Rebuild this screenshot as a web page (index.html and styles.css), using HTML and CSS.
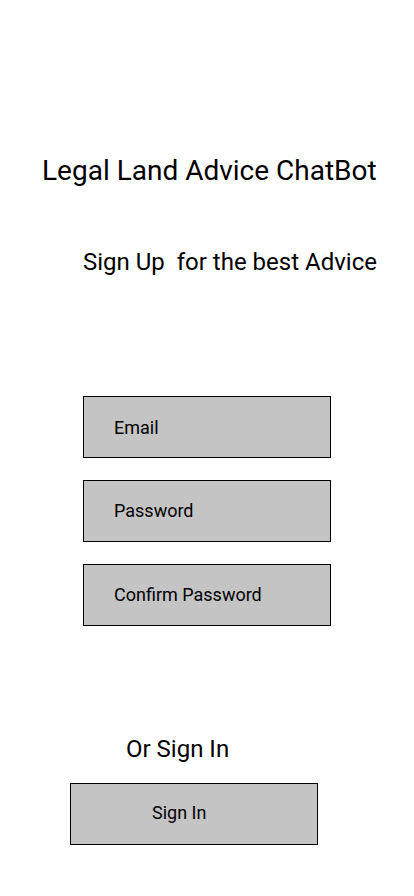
FILE: index.html
```html
<!DOCTYPE html>
<html>
<head>
<meta charset="utf-8">
<link rel="stylesheet" href="styles.css">
</head>
<body>
<main class="screen">
  <h1 class="title">Legal Land Advice ChatBot</h1>
  <p class="subtitle">Sign Up&nbsp; for the best Advice</p>
  <form class="fields">
    <div class="field field-email">Email</div>
    <div class="field">Password</div>
    <div class="field">Confirm Password</div>
  </form>
  <p class="alt">Or Sign In</p>
  <div class="signin">Sign In</div>
</main>
</body>
</html>
```
FILE: styles.css
```css
html, body {
  margin: 0;
  padding: 0;
  background: #ffffff;
}
.screen {
  width: 414px;
  height: 896px;
  display: flex;
  flex-direction: column;
  font-family: Roboto, "Noto Sans", sans-serif;
  color: #000;
}
.title {
  margin: 155px 0 0 42px;
  font-size: 28px;
  font-weight: 400;
  line-height: 32px;
}
.subtitle {
  margin: 61px 0 0 83px;
  font-size: 24px;
  line-height: 28px;
}
.fields {
  margin: 120px 0 0 83px;
  display: flex;
  flex-direction: column;
  gap: 22px;
}
.field {
  box-sizing: border-box;
  width: 248px;
  height: 62px;
  background: #c4c4c4;
  border: 1px solid #000;
  padding: 1px 0 0 30px;
  font-size: 18px;
  line-height: 58px;
}
.field-email {
  padding-top: 2px;
}
.alt {
  margin: 109px 0 0 126px;
  font-size: 24px;
  line-height: 28px;
}
.signin {
  box-sizing: border-box;
  margin: 20px 0 0 70px;
  width: 248px;
  height: 62px;
  background: #c4c4c4;
  border: 1px solid #000;
  padding: 0 0 0 81px;
  font-size: 18px;
  line-height: 58px;
}
```
